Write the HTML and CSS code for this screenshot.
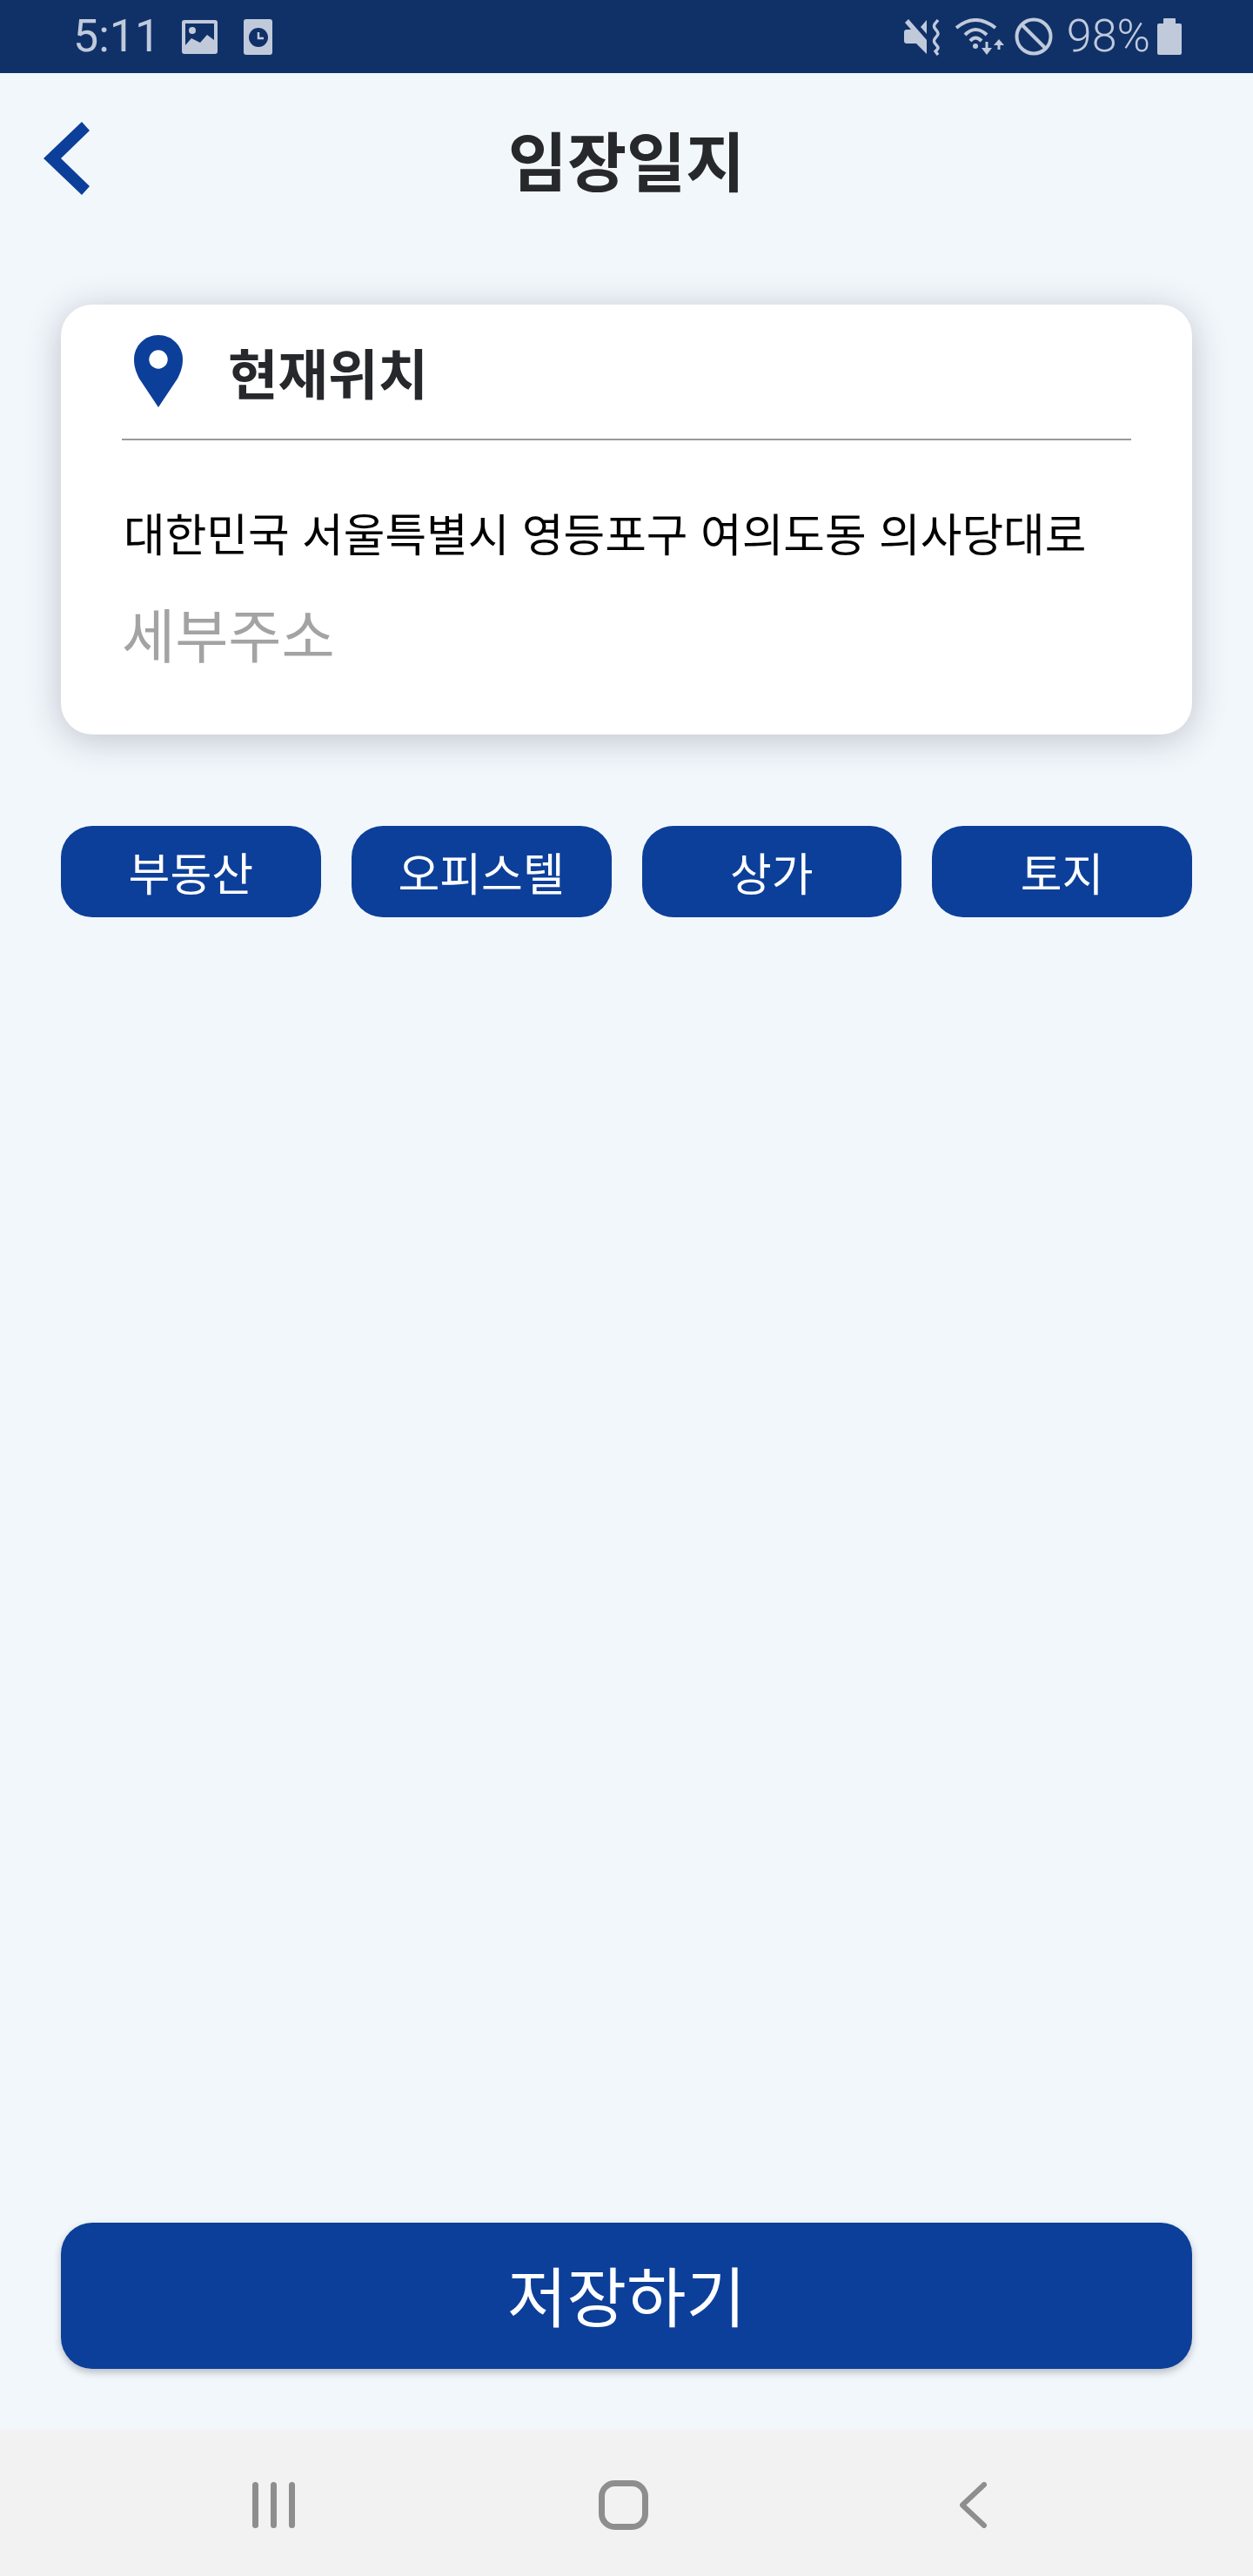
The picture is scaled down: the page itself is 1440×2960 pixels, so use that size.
FILE: index.html
```html
<!DOCTYPE html>
<html lang="ko">
<head>
    <meta charset="UTF-8">
    <meta name="viewport" content="width=device-width, initial-scale=1.0">
    <title>임장일지</title>
    <link rel="stylesheet" href="styles.css">
</head>
<body>
    <div class="app">
        <!-- status bar -->
        <div class="status-bar">
            <div class="status-left">
                <span class="clock">5:11</span>
                <svg class="ic-image" width="41" height="39" viewBox="0 0 41 39">
                    <rect width="41" height="39" rx="3" fill="#c0cadb"/>
                    <path d="M4 4H37V23L29 17L21 26L11 21L4 29Z" fill="#103168"/>
                    <circle cx="12" cy="12" r="4" fill="#c0cadb"/>
                </svg>
                <svg class="ic-doc" width="33" height="41" viewBox="0 0 33 41">
                    <rect width="33" height="41" rx="3" fill="#c0cadb"/>
                    <circle cx="17" cy="21" r="11" fill="#103168"/>
                    <path d="M17 15V22H23" fill="none" stroke="#c0cadb" stroke-width="2.5"/>
                </svg>
            </div>
            <div class="status-right">
                <svg class="ic-mute" width="42" height="43" viewBox="0 0 42 43">
                    <path d="M5 1L26 25V41L14 29H3Q0 29 0 26V16Q0 13 3 13H8L1 5ZM26 2V18L19 10Z" fill="#c0cadb"/>
                    <path d="M39 2L35 7Q34 9 35 11L38 15Q40 18 38 20L35 24Q34 26 35 28L38 32Q40 34 38 36L36 38L39 42" fill="none" stroke="#c0cadb" stroke-width="3.4"/>
                </svg>
                <svg class="ic-wifi" width="56" height="43" viewBox="0 0 56 43">
                    <g fill="none" stroke="#c0cadb" stroke-width="4">
                        <path d="M1 11Q23 -7 46 11"/>
                        <path d="M11 19Q23 7 36 19"/>
                        <path d="M17 26Q23 19 30 26"/>
                    </g>
                    <circle cx="23" cy="32" r="3" fill="#c0cadb"/>
                    <path d="M36 27V36M50 36V29" fill="none" stroke="#c0cadb" stroke-width="3"/>
                    <path d="M30 34H42L36 42ZM44 31H56L50 24Z" fill="#c0cadb"/>
                </svg>
                <svg class="ic-block" width="44" height="44" viewBox="0 0 44 44">
                    <circle cx="22" cy="22" r="19.5" fill="none" stroke="#c0cadb" stroke-width="4"/>
                    <path d="M8 8L36 36" stroke="#c0cadb" stroke-width="4"/>
                </svg>
                <span class="battery-text">98%</span>
                <svg class="ic-battery" width="28" height="42" viewBox="0 0 28 42">
                    <path d="M7 1Q7 0 8 0H20Q21 0 21 1V6H26Q28 6 28 8V40Q28 42 26 42H2Q0 42 0 40V8Q0 6 2 6H7Z" fill="#c0cadb"/>
                </svg>
            </div>
        </div>

        <header class="top-bar">
            <svg class="back-btn" width="53" height="84" viewBox="0 0 53 84">
                <path d="M44 0L53 10L20 42L53 74L44 84L0 42Z" fill="#0c3f99"/>
            </svg>
            <h1 class="page-title">임장일지</h1>
        </header>

        <main class="content">
            <section class="location-card">
                <div class="location-head">
                    <svg class="pin" width="56" height="83" viewBox="0 0 56 83">
                        <path d="M28 0C12.5 0 0 12.5 0 28C0 37 3 44 6 50L28 83L50 50C53 44 56 37 56 28C56 12.5 43.5 0 28 0Z" fill="#0c3f99"/>
                        <circle cx="28" cy="28" r="10.7" fill="#fff"/>
                    </svg>
                    <h2 class="location-title">현재위치</h2>
                </div>
                <p class="address">대한민국 서울특별시 영등포구 여의도동 의사당대로</p>
                <p class="address-detail">세부주소</p>
            </section>

            <div class="type-list">
                <button class="type-btn" type="button">부동산</button>
                <button class="type-btn" type="button">오피스텔</button>
                <button class="type-btn" type="button">상가</button>
                <button class="type-btn" type="button">토지</button>
            </div>

            <button class="save-btn" type="button">저장하기</button>
        </main>

        <!-- android nav -->
        <nav class="nav-bar">
            <svg width="49" height="53" viewBox="0 0 49 53">
                <path d="M3.5 3.5V49.5M24.5 3.5V49.5M45.5 3.5V49.5" fill="none" stroke="#8e8e8e" stroke-width="7" stroke-linecap="round"/>
            </svg>
            <svg class="nav-home" width="57" height="57" viewBox="0 0 57 57">
                <rect x="3.5" y="3.5" width="50" height="50" rx="15" fill="none" stroke="#8e8e8e" stroke-width="7"/>
            </svg>
            <svg class="nav-back" width="31" height="53" viewBox="0 0 31 53">
                <path d="M28 3L3 26.5L28 50" fill="none" stroke="#8e8e8e" stroke-width="6" stroke-linecap="round" stroke-linejoin="round"/>
            </svg>
        </nav>
    </div>
</body>
</html>
```

FILE: styles.css
```css
* {
    box-sizing: border-box;
}
html,
body {
    margin: 0;
    padding: 0;
}
body {
    background-color: #f2f7fc;
    font-family: "Noto Sans CJK KR", "Noto Sans", sans-serif;
}
.app {
    display: flex;
    flex-direction: column;
    height: 2960px;
}

/* status bar */
.status-bar {
    display: flex;
    justify-content: space-between;
    align-items: center;
    height: 84px;
    padding: 0 82px 0 84px;
    background-color: #103168;
    color: #c0cadb;
    font-family: Roboto, sans-serif;
}
.status-left,
.status-right {
    display: flex;
    align-items: center;
}
.clock {
    width: 125px;
    font-size: 52px;
    line-height: 84px;
}
.ic-doc {
    margin-left: 30px;
}
.ic-wifi {
    margin-left: 17px;
}
.ic-block {
    margin-left: 12px;
}
.battery-text {
    margin-left: 16px;
    font-size: 52px;
    font-weight: 300;
    line-height: 84px;
}
.ic-battery {
    margin-left: 8px;
}

/* header */
.top-bar {
    display: grid;
    grid-template-columns: 1fr auto 1fr;
    align-items: center;
    height: 196px;
    padding: 0 50px;
}
.page-title {
    margin: 0;
    color: #26282b;
    font-size: 74px;
    font-weight: 700;
    line-height: 1.2;
}

/* page content */
.content {
    display: flex;
    flex: 1;
    flex-direction: column;
    padding: 70px 70px 70px;
}
.location-card {
    height: 494px;
    padding: 35px 70px 0;
    background-color: #fff;
    border-radius: 36px;
    box-shadow: 0 6px 40px rgba(30, 35, 45, 0.24);
}
.location-head {
    display: flex;
    height: 121px;
    padding-left: 14px;
    border-bottom: 2px solid #999;
}
.pin {
    margin-right: 52px;
}
.location-title {
    margin: 0;
    color: #26282b;
    font-size: 62.5px;
    font-weight: 700;
    line-height: 84px;
}
.address {
    margin: 71px 0 0 2px;
    color: #000;
    font-size: 51.8px;
    line-height: 70px;
    white-space: nowrap;
}
.address-detail {
    margin: 40px 0 0;
    color: #a3a3a3;
    font-size: 66.5px;
    line-height: 80px;
}

/* type buttons */
.type-list {
    display: grid;
    grid-template-columns: repeat(4, 1fr);
    gap: 35px;
    margin-top: 105px;
}
.type-btn {
    height: 105px;
    padding: 0;
    border: none;
    border-radius: 36px;
    background-color: #0c3f99;
    color: #fff;
    font-family: inherit;
    font-size: 52px;
}
.save-btn {
    height: 168px;
    margin-top: auto;
    padding: 0 0 6px;
    border: none;
    border-radius: 36px;
    background-color: #0c3f99;
    box-shadow: 0 4px 8px rgba(30, 35, 45, 0.28);
    color: #fff;
    font-family: inherit;
    font-size: 74.5px;
}

/* android nav */
.nav-bar {
    display: flex;
    align-items: center;
    height: 168px;
    padding: 5px 0 0 290px;
    background-color: #f2f2f2;
}
.nav-home {
    margin-left: 349px;
}
.nav-back {
    margin-left: 358px;
}
```
